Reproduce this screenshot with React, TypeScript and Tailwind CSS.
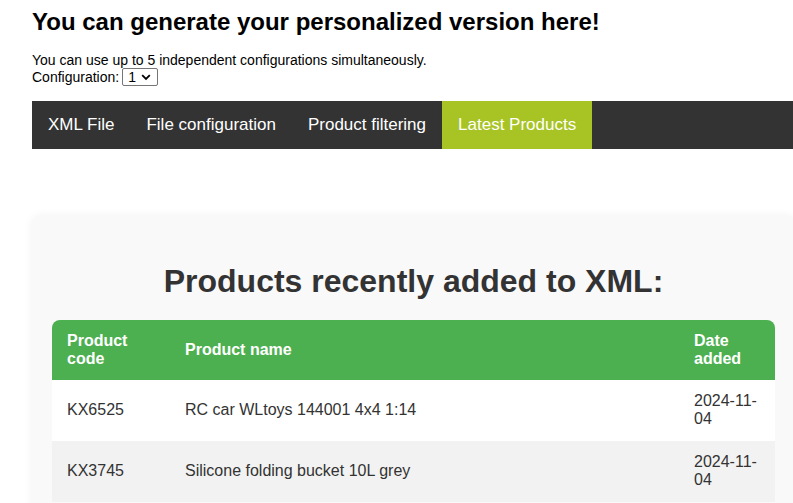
import React from 'react';

const rows = [
  { code: 'KX6525', name: 'RC car WLtoys 144001 4x4 1:14', date: '2024-11-04' },
  { code: 'KX3745', name: 'Silicone folding bucket 10L grey', date: '2024-11-04' },
];

const tabs = ['XML File', 'File configuration', 'Product filtering', 'Latest Products'];

export default function App() {
  return (
    <div className="h-[503px] overflow-hidden bg-white font-['Liberation_Sans',Arial,sans-serif] text-black">
      <div className="w-[763px] ml-8">
        <h1 className="pt-[8px] text-[24px] font-bold leading-[28px]">
          You can generate your personalized version here!
        </h1>

        <div className="mt-[16px] text-[14px] leading-[16px]">
          <p>You can use up to 5 independent configurations simultaneously.</p>
          <div className="flex h-[18px] items-center">
            <span>Configuration:</span>
            <div className="relative ml-[3px] flex h-[18px] w-[36px] items-center rounded-[2px] border border-[#767676] pl-[5px]">
              <span className="text-[14px] leading-none">1</span>
              <svg className="absolute right-[6px] top-[5px]" width="10" height="7" viewBox="0 0 10 7">
                <path d="M1.2 1.2 L5 5 L8.8 1.2" fill="none" stroke="#000" strokeWidth="1.8" />
              </svg>
            </div>
          </div>
        </div>

        <nav className="mt-[15px] flex h-[48px] w-[763px] bg-[#333333]">
          {tabs.map((t, i) => (
            <div
              key={t}
              className={
                i === 3
                  ? 'flex items-center bg-[#a8c424] px-4 text-[17px] text-white'
                  : 'flex items-center px-4 text-[17px] text-white'
              }
            >
              {t}
            </div>
          ))}
        </nav>

        <section className="mt-[67px] rounded-lg bg-[#f9f9f9] px-5 pt-[47px] pb-6 shadow-[0_0_10px_rgba(0,0,0,0.06)]">
          <h2 className="text-center text-[32px] font-bold leading-[37px] text-[#333333]">
            Products recently added to XML:
          </h2>

          <table className="mt-[20px] w-[723px] border-collapse text-[16px] leading-[18px]">
            <thead>
              <tr className="bg-[#4caf50] text-left text-white">
                <th className="w-[118px] rounded-tl-lg px-[15px] py-[12px] font-bold">Product code</th>
                <th className="px-[15px] py-[12px] font-bold">Product name</th>
                <th className="w-[96px] rounded-tr-lg px-[15px] py-[12px] font-bold">Date added</th>
              </tr>
            </thead>
            <tbody>
              {rows.map((r, i) => (
                <tr key={r.code} className={i % 2 === 1 ? 'bg-[#f2f2f2]' : 'bg-white'}>
                  <td className="px-[15px] pt-[12px] pb-[13px] text-[#333333]">{r.code}</td>
                  <td className="px-[15px] pt-[12px] pb-[13px] text-[#333333]">{r.name}</td>
                  <td className="px-[15px] pt-[12px] pb-[13px] text-[#333333]">{r.date}</td>
                </tr>
              ))}
            </tbody>
          </table>
        </section>
      </div>
    </div>
  );
}
